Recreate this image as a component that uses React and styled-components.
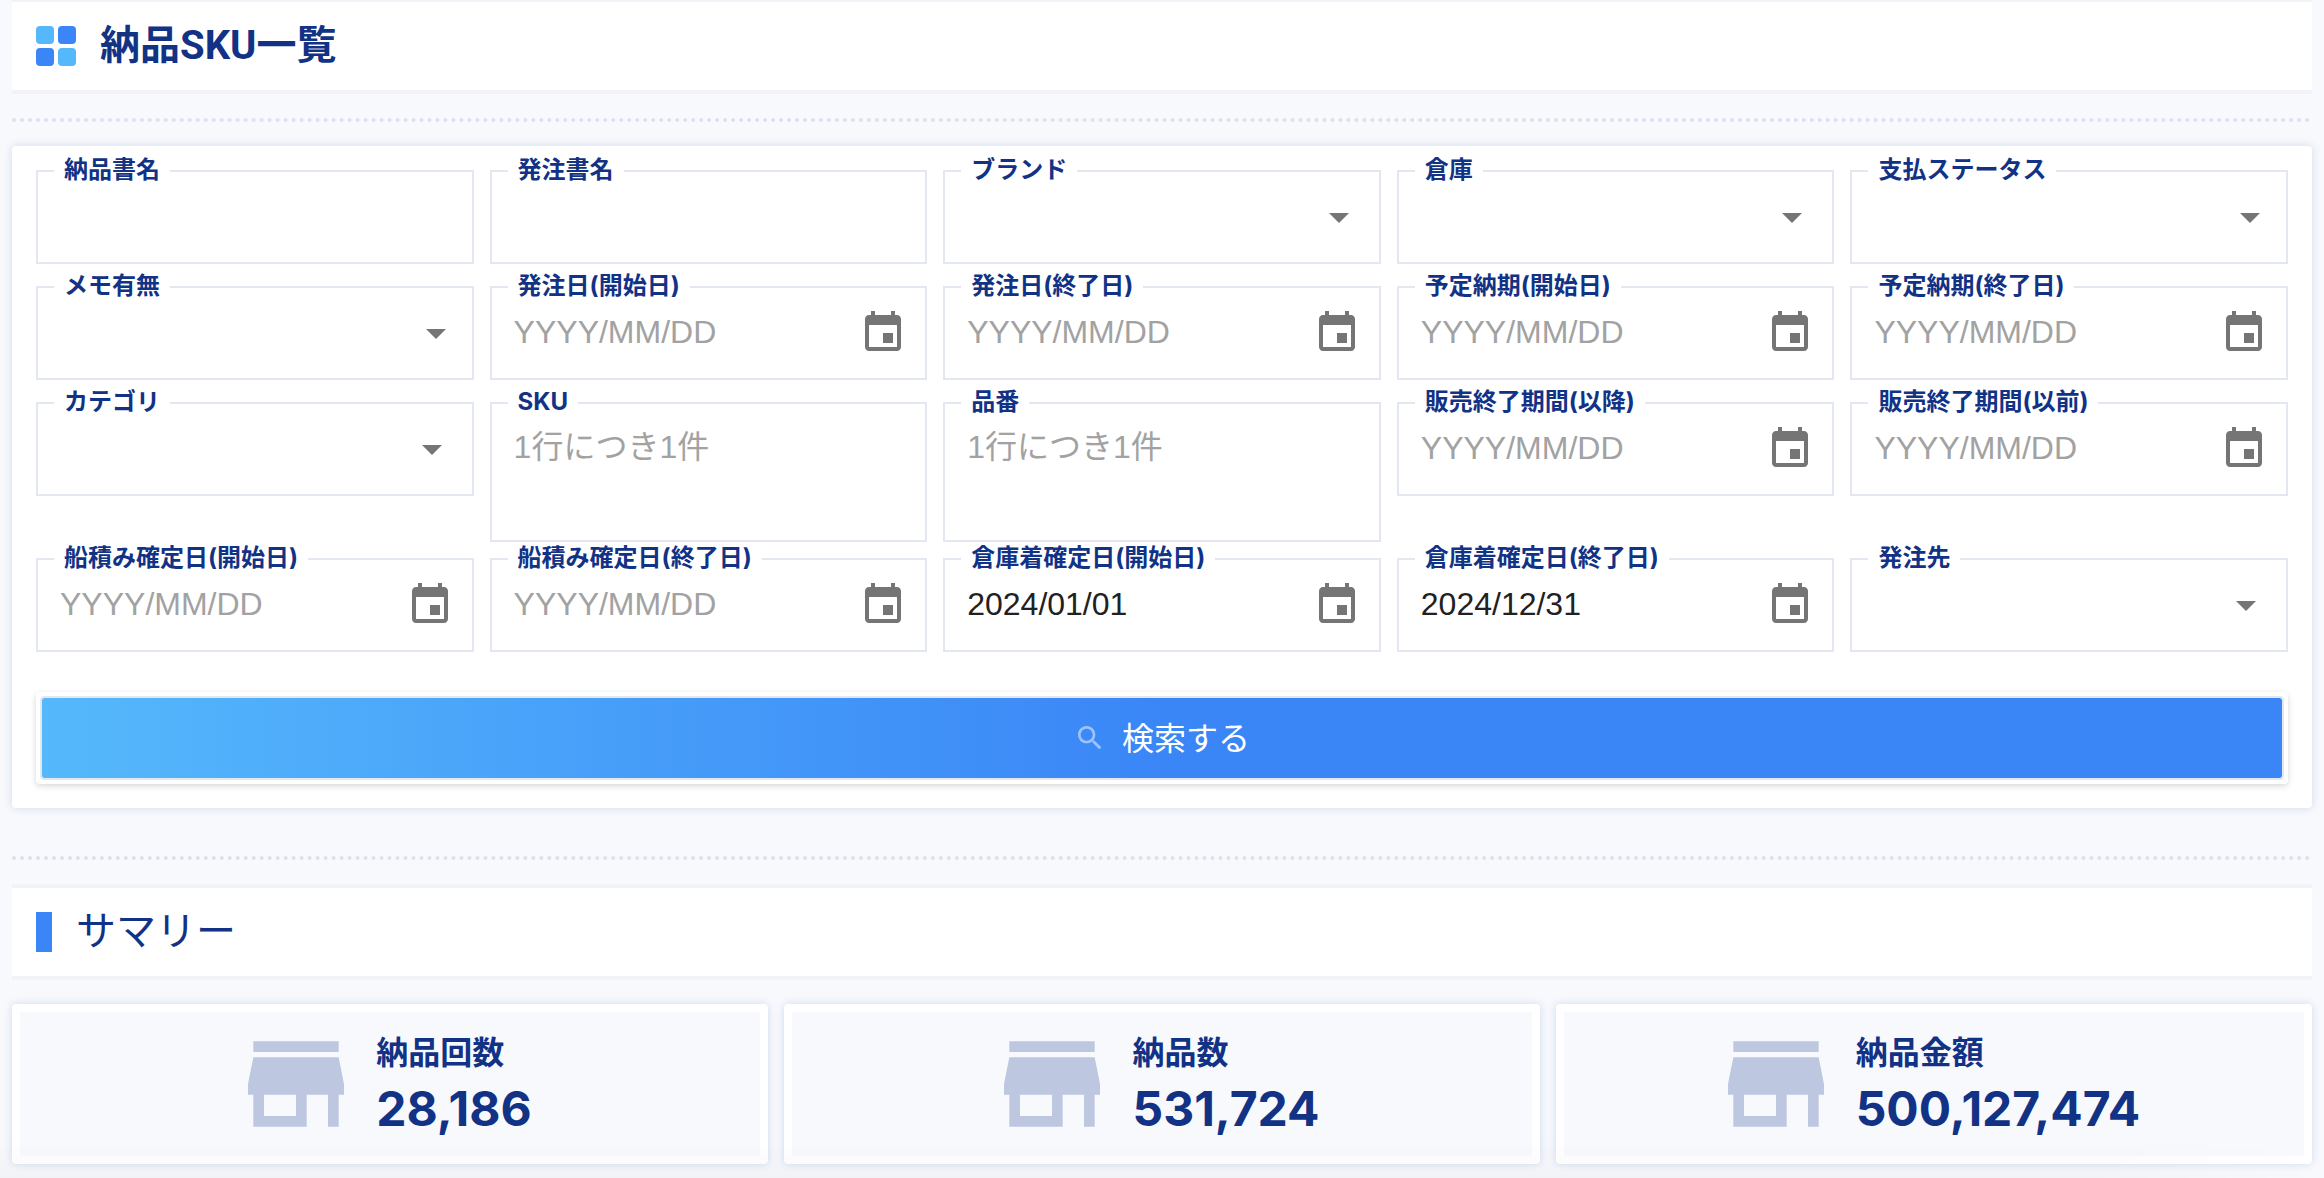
import React, { useState } from 'react';
import styled, { createGlobalStyle } from 'styled-components';


const fields = [
  { id: 'deliveryName', label: '納品書名', type: 'text' },
  { id: 'orderName', label: '発注書名', type: 'text' },
  { id: 'brand', label: 'ブランド', type: 'select', inset: 16 },
  { id: 'warehouse', label: '倉庫', type: 'select', inset: 16 },
  { id: 'paymentStatus', label: '支払ステータス', type: 'select', inset: 12 },
  { id: 'memo', label: 'メモ有無', type: 'select', inset: 12 },
  { id: 'orderDateFrom', label: '発注日(開始日)', type: 'date' },
  { id: 'orderDateTo', label: '発注日(終了日)', type: 'date' },
  { id: 'dueDateFrom', label: '予定納期(開始日)', type: 'date' },
  { id: 'dueDateTo', label: '予定納期(終了日)', type: 'date' },
  { id: 'category', label: 'カテゴリ', type: 'select', inset: 16 },
  { id: 'sku', label: 'SKU', type: 'lines' },
  { id: 'itemNumber', label: '品番', type: 'lines' },
  { id: 'saleEndFrom', label: '販売終了期間(以降)', type: 'date' },
  { id: 'saleEndTo', label: '販売終了期間(以前)', type: 'date' },
  { id: 'shipDateFrom', label: '船積み確定日(開始日)', type: 'date' },
  { id: 'shipDateTo', label: '船積み確定日(終了日)', type: 'date' },
  { id: 'arrivalDateFrom', label: '倉庫着確定日(開始日)', type: 'date' },
  { id: 'arrivalDateTo', label: '倉庫着確定日(終了日)', type: 'date' },
  { id: 'supplier', label: '発注先', type: 'select', inset: 16 },
];

const summary = [
  { name: '納品回数', value: 28186 },
  { name: '納品数', value: 531724 },
  { name: '納品金額', value: 500127474 },
];

const EventIcon = () => (
  <svg width="48" height="48" viewBox="0 0 24 24" fill="currentColor" aria-hidden="true">
    <path d="M17 12h-5v5h5v-5zM16 1v2H8V1H6v2H5c-1.11 0-1.99.9-1.99 2L3 19c0 1.1.89 2 2 2h14c1.1 0 2-.9 2-2V5c0-1.1-.9-2-2-2h-1V1h-2zm3 18H5V8h14v11z" />
  </svg>
);

const SearchIcon = () => (
  <svg width="32" height="32" viewBox="0 0 24 24" fill="currentColor" aria-hidden="true">
    <path d="M15.5 14h-.79l-.28-.27C15.41 12.59 16 11.11 16 9.5 16 5.91 13.09 3 9.5 3S3 5.91 3 9.5 5.91 16 9.5 16c1.61 0 3.09-.59 4.23-1.57l.27.28v.79l5 4.99L20.49 19l-4.99-5zm-6 0C7.01 14 5 11.99 5 9.5S7.01 5 9.5 5 14 7.01 14 9.5 11.99 14 9.5 14z" />
  </svg>
);

const StoreIcon = () => (
  <svg width="128" height="128" viewBox="0 0 24 24" fill="#bec7e0" aria-hidden="true">
    <path d="M20 4H4v2h16V4zm1 10v-2l-1-5H4l-1 5v2h1v6h10v-6h4v6h2v-6h1zm-9 4H6v-4h6v4z" />
  </svg>
);

const Field = ({ field, value, onChange }) => {

  const displayControl = () => {
    const common = { id: field.id, value: value || '', onChange };
    if (field.type === 'select') {
      return (
        <SelectWrap>
          <Select {...common}><option value=""></option></Select>
          <Arrow $inset={field.inset} viewBox="0 0 24 24" aria-hidden="true">
            <path d="M7 10l5 5 5-5z" />
          </Arrow>
        </SelectWrap>
      );
    }
    if (field.type === 'lines') {
      return <TextArea {...common} placeholder="1行につき1件" />;
    }
    if (field.type === 'date') {
      return (
        <>
          <Input {...common} placeholder="YYYY/MM/DD" />
          <IconButton type="button" aria-label={`${field.label} カレンダー`}><EventIcon /></IconButton>
        </>
      );
    }
    return <Input {...common} />;
  };

  return (
    <FieldBox $tall={field.type === 'lines'}>
      <Label htmlFor={field.id}>{field.label}</Label>
      {displayControl()}
    </FieldBox>
  );
};

const App = () => {
  const [values, setValues] = useState({
    arrivalDateFrom: '2024/01/01',
    arrivalDateTo: '2024/12/31',
  });

  const handleChange = (id) => (e) => setValues({ ...values, [id]: e.target.value });

  return (
    <Page>
      <GlobalStyle />
      <TitleBar $first>
        <Tiles><Tile /><Tile $dark /><Tile $dark /><Tile /></Tiles>
        <Title>納品SKU一覧</Title>
      </TitleBar>
      <Divider />
      <SearchPanel onSubmit={(e) => e.preventDefault()}>
        <FieldGrid>
          {fields.map((field) => (
            <Field key={field.id} field={field} value={values[field.id]} onChange={handleChange(field.id)} />
          ))}
        </FieldGrid>
        <ButtonFrame>
          <SearchButton type="submit"><SearchIcon /><ButtonText>検索する</ButtonText></SearchButton>
        </ButtonFrame>
      </SearchPanel>
      <Divider $wide />
      <TitleBar>
        <Marker />
        <SubTitle>サマリー</SubTitle>
      </TitleBar>
      <Cards>
        {summary.map((item) => (
          <Card key={item.name}>
            <StoreIcon />
            <CardText>
              <CardName>{item.name}</CardName>
              <CardValue>{item.value.toLocaleString('en-US')}</CardValue>
            </CardText>
          </Card>
        ))}
      </Cards>
      <BottomShade />
    </Page>
  );
};

export default App;



const GlobalStyle = createGlobalStyle`
  * {
    box-sizing: border-box;
  }

  body {
    margin: 0;
    background: #f8f9fd;
    color: #123285;
    font-family: Inter, "Noto Sans CJK JP", sans-serif;
  }

  svg {
    display: block;
    flex: none;
  }
`;

const Page = styled.main`
  padding: 0 12px 14px;
`;

const TitleBar = styled.header`
  display: flex;
  align-items: center;
  gap: 24px;
  min-height: ${props => props.$first ? '94px' : '96px'};
  padding: 0 24px;
  background: #fff;
  border-top: ${props => props.$first ? '2px' : '4px'} solid #f1f3f8;
  border-bottom: 4px solid #f1f3f8;
`;

const Tiles = styled.div`
  display: grid;
  grid-template-columns: 18px 18px;
  grid-auto-rows: 18px;
  gap: 4px;
`;

const Tile = styled.span`
  border-radius: 4px;
  background: ${props => props.$dark ? '#3a86f7' : '#55b8fb'};
`;

const Title = styled.h1`
  margin: 0;
  font-family: Roboto, "Noto Sans CJK JP", sans-serif;
  font-size: 40px;
  line-height: 56px;
  font-weight: 700;
`;

const SubTitle = styled.h2`
  margin: 0;
  padding-bottom: 2px;
  font-size: 40px;
  line-height: 56px;
  font-weight: 400;
`;

const Marker = styled.span`
  width: 16px;
  height: 40px;
  background: #3a86f7;
`;

const Divider = styled.hr`
  margin: ${props => props.$wide ? '48px' : '24px'} 0 24px;
  border: 0;
  border-top: 4px dotted #dbe2ee;
`;

const SearchPanel = styled.form`
  padding: 24px;
  background: #fff;
  border-radius: 4px;
  box-shadow: 0 0 8px rgba(70, 120, 180, 0.24);
`;

const FieldGrid = styled.div`
  display: grid;
  grid-template-columns: repeat(5, minmax(0, 1fr));
  grid-auto-rows: minmax(100px, auto);
  gap: 16px;
  align-items: start;
`;

const FieldBox = styled.div`
  position: relative;
  display: flex;
  align-items: ${props => props.$tall ? 'stretch' : 'center'};
  height: ${props => props.$tall ? '140px' : '94px'};
  border: 2px solid #e3e7f1;
`;

const Label = styled.label`
  position: absolute;
  top: -16px;
  left: 16px;
  padding: 0 10px;
  background: #fff;
  font-size: 24px;
  line-height: 28px;
  font-weight: 700;
  white-space: nowrap;
`;

const Input = styled.input`
  flex: 1;
  min-width: 0;
  height: 100%;
  padding: 0 22px 2px;
  border: 0;
  outline: 0;
  background: none;
  color: #212121;
  font: 32px "Liberation Sans", "Noto Sans CJK JP", sans-serif;
  font-kerning: none;

  &::placeholder {
    color: #a2a2a2;
    opacity: 1;
  }
`;

const TextArea = styled(Input).attrs({ as: 'textarea' })`
  padding: 20px 22px 0;
  line-height: 46px;
  resize: none;
`;

const SelectWrap = styled.div`
  flex: 1;
  display: grid;
  align-items: center;
  height: 100%;
`;

const Select = styled.select`
  grid-area: 1 / 1;
  width: 100%;
  height: 100%;
  padding: 0 22px;
  border: 0;
  outline: 0;
  appearance: none;
  background: none;
  color: #212121;
  font: 32px "Liberation Sans", "Noto Sans CJK JP", sans-serif;
`;

const Arrow = styled.svg`
  grid-area: 1 / 1;
  justify-self: end;
  width: 48px;
  height: 48px;
  margin-right: ${props => props.$inset}px;
  fill: #757575;
  pointer-events: none;
`;

const IconButton = styled.button`
  margin: 0 18px 0 0;
  padding: 0;
  border: 0;
  background: none;
  color: #757575;
  cursor: pointer;
`;

const ButtonFrame = styled.div`
  margin-top: 34px;
  padding: 4px;
  background: #fff;
  border-radius: 4px;
  box-shadow: 0 2px 6px rgba(0, 0, 0, 0.16);
`;

const SearchButton = styled.button`
  display: flex;
  align-items: center;
  justify-content: center;
  gap: 16px;
  width: 100%;
  height: 84px;
  border: 2px solid #e3e7ee;
  border-radius: 4px;
  background: linear-gradient(90deg, #55b8fb, #3a86f7 50%) padding-box;
  color: #fff;
  font: 32px Inter, "Noto Sans CJK JP", sans-serif;
  cursor: pointer;

  svg {
    opacity: 0.5;
  }
`;

const ButtonText = styled.span`
  padding-bottom: 4px;
`;

const Cards = styled.section`
  display: grid;
  grid-template-columns: repeat(3, minmax(0, 1fr));
  gap: 16px;
  margin-top: 24px;
`;

const Card = styled.article`
  display: flex;
  align-items: center;
  justify-content: center;
  min-height: 160px;
  border: 8px solid #fff;
  border-radius: 4px;
  background: #f8f9fd;
  box-shadow: 0 0 8px rgba(70, 120, 180, 0.24);
`;

const CardText = styled.div`
  padding: 2px 16px 0;
`;

const CardName = styled.div`
  font-size: 32px;
  line-height: 48px;
  font-weight: 700;
`;

const CardValue = styled.div`
  font-size: 48px;
  line-height: 64px;
  font-weight: 700;
`;

const BottomShade = styled.div`
  position: fixed;
  right: 0;
  bottom: 0;
  left: 0;
  height: 38px;
  background: linear-gradient(rgba(0, 0, 0, 0), rgba(0, 0, 0, 0.025));
  mask-image: linear-gradient(90deg, #000 90%, transparent);
  pointer-events: none;
`;
